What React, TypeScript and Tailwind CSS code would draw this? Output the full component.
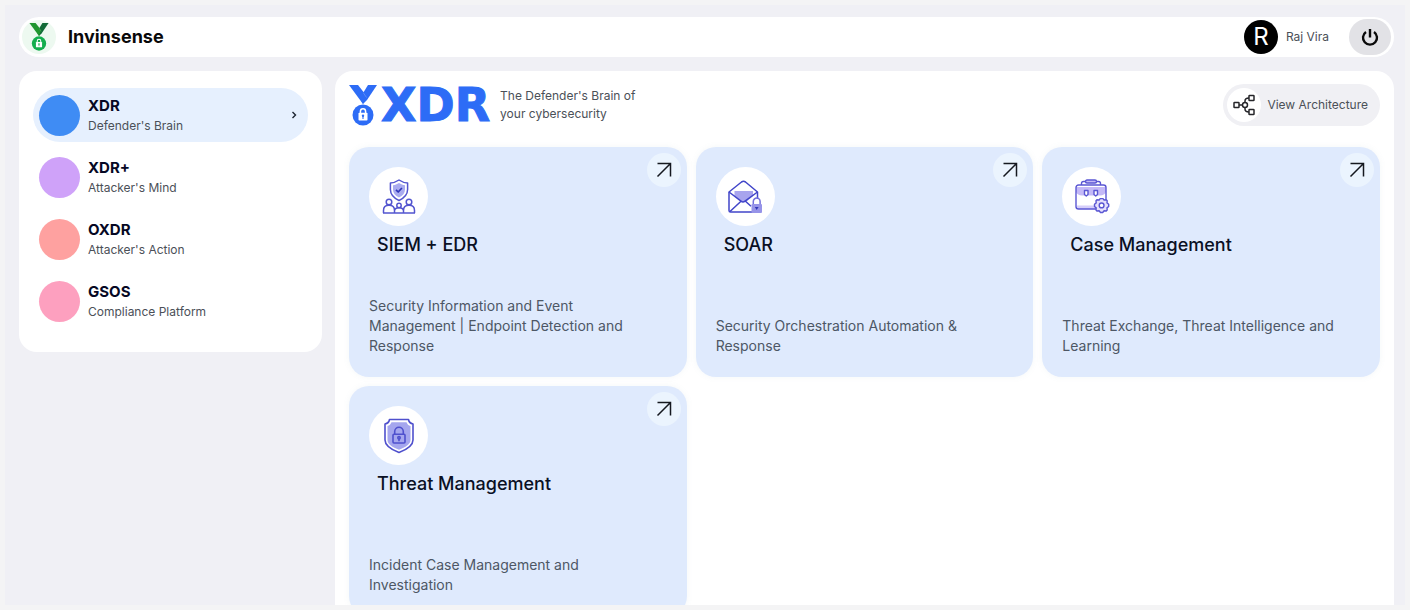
import React from "react";

type Product = { name: string; tagline: string; dot: string; active?: boolean };

const products: Product[] = [
  { name: "XDR", tagline: "Defender's Brain", dot: "bg-[#3f8cf4]", active: true },
  { name: "XDR+", tagline: "Attacker's Mind", dot: "bg-[#cfa2f9]" },
  { name: "OXDR", tagline: "Attacker's Action", dot: "bg-[#fea1a0]" },
  { name: "GSOS", tagline: "Compliance Platform", dot: "bg-[#fda0bf]" },
];

function Medal({ className, left, right, disc }: { className: string; left: string; right: string; disc: string }) {
  return (
    <svg className={className} viewBox="0 0 28 41" aria-hidden="true">
      <path d="M19 0h9L18 15l-4 4-3-6z" fill={right} />
      <path d="M0 0h9l5.500 7L17 11l-3 8z" fill={left} />
      <path d="M14.500 8l3 4.500" stroke="#fff" strokeOpacity=".35" strokeWidth=".6" />
      <circle cx="14" cy="30" r="10.500" fill={disc} />
      <path d="M11.400 28v-1.600a2.600 2.600 0 0 1 5.200 0V28" fill="none" stroke="#fff" strokeWidth="1.500" />
      <rect x="9.500" y="27.800" width="9" height="7.700" rx=".8" fill="#fff" />
      <circle cx="14" cy="30.700" r="1.200" fill={disc} />
      <path d="M14 31v3" stroke={disc} strokeWidth="1.100" />
    </svg>
  );
}

function TeamShieldIcon() {
  return (
    <svg className="size-9" viewBox="0 0 36 36" fill="none" stroke="#5355cf" strokeWidth="1.500" strokeLinejoin="round" aria-hidden="true">
      <path d="M18 1c3 2 5.500 2.800 8.600 3v6.500c0 5-3.600 8.600-8.600 11-5-2.400-8.600-6-8.600-11V4c3.100-.2 5.600-1 8.600-3z" />
      <path d="M18 4.100c2 1.300 3.900 1.900 6 2.200v4.200c0 3.600-2.300 6.100-6 8-3.700-1.900-6-4.400-6-8V6.300c2.100-.3 4-.9 6-2.200z" fill="#a9abf0" stroke="none" />
      <path d="M15 10.800l2.200 2.200 3.700-4" stroke="#3136b8" strokeWidth="1.700" />
      <circle cx="8" cy="23" r="2.800" />
      <circle cx="28" cy="23" r="2.800" />
      <circle cx="18" cy="26.500" r="2.200" />
      <path d="M2.500 34v-2.500c0-3.400 2-5.200 5.500-5.200s5.500 1.800 5.500 5.200V34M22.500 34v-2.500c0-3.400 2-5.200 5.500-5.200s5.500 1.800 5.500 5.200V34M13.500 34v-2c0-2 1.600-3.300 4.500-3.300s4.500 1.300 4.500 3.300v2M2 34h32" />
    </svg>
  );
}

function MailLockIcon() {
  return (
    <svg className="size-9" viewBox="0 0 36 36" fill="none" stroke="#4145c9" strokeWidth="1.500" strokeLinejoin="round" aria-hidden="true">
      <path d="M7.500 12h18.500v5l-7 6h-3.500l-8-6z" fill="#a8a4ee" stroke="none" />
      <path d="M26 33H3.500a1.500 1.500 0 0 1-1.500-1.500V13L14.500 3q2-1.300 4 0L30.500 13v7" />
      <path d="M2 13l12 9.200q2 1.500 4 0L30.500 13M3 32.500l11-10.300M18.500 22.200l5.500 5" />
      <path d="M26.300 25v-2.500a3.400 3.400 0 0 1 6.800 0V25" stroke="#7370dc" />
      <rect x="24.500" y="25" width="10.500" height="9" rx="1" fill="#9693e8" stroke="none" />
      <path d="M27.800 28h3.800l-1.900 3z" fill="#3136b8" stroke="none" />
    </svg>
  );
}

function BriefcaseGearIcon() {
  return (
    <svg className="size-9" viewBox="0 0 36 36" fill="none" stroke="#5b57d3" strokeWidth="1.400" strokeLinejoin="round" aria-hidden="true">
      <path d="M2 8h30v5c-1 2.500-3 3.200-6 3.500H8c-3-.3-5-1-6-3.500z" fill="#c4b9f7" stroke="none" />
      <path d="M2.500 26.500h20V30H4z" fill="#d5cefa" stroke="none" />
      <path d="M22 30H4.500A2.500 2.500 0 0 1 2 27.500v-19A2.500 2.500 0 0 1 4.500 6h25A2.500 2.500 0 0 1 32 8.500v12" />
      <path d="M7.500 6V4.500a2 2 0 0 1 2-2h15a2 2 0 0 1 2 2V6" />
      <rect x="11.500" y="1" width="11" height="3" rx="1.500" fill="#c4b9f7" />
      <path d="M10.500 11.500h3.500v4l-1.750 1.500-1.750-1.500zM20 11.500h3.500v4l-1.750 1.500-1.750-1.500z" fill="#fff" />
      <path d="M29 19.600l1.100 1.400 2.200-.2.900.9-.2 2.200 1.700 1.400v2.200l-1.700 1.400.2 2.200-.9.900-2.200-.2-1.400 1.700h-2.200l-1.400-1.700-2.200.2-.9-.9.200-2.200-1.700-1.400v-2.200l1.700-1.400-.2-2.200.9-.9 2.200.2 1.100-1.400z" fill="#e4dffc" />
      <circle cx="27.600" cy="26.400" r="2.400" fill="#fff" />
    </svg>
  );
}

function ShieldLockIcon() {
  return (
    <svg className="size-9" viewBox="0 0 36 36" fill="none" stroke="#4f50cd" strokeWidth="1.600" strokeLinejoin="round" aria-hidden="true">
      <path d="M8.500 1.500h19c.4 2.500 1.900 4 4.500 4.500v16c0 6-6.500 9.700-14 12.500C10.500 31.700 4 28 4 22V6c2.600-.5 4.100-2 4.500-4.500z" />
      <path d="M10.500 4.300h15c.8 2 1.900 3.100 4 3.800V22c0 4.200-5 7.200-11.500 9.700C11.500 29.200 6.500 26.200 6.500 22V8.100c2.100-.7 3.200-1.800 4-3.800z" fill="#a5a6ee" stroke="none" />
      <path d="M13.700 16.300V13.500a4.300 4.300 0 0 1 8.600 0v2.800" />
      <rect x="12" y="16.300" width="12" height="8.700" rx="1" />
      <circle cx="18" cy="19.800" r="1.200" />
      <path d="M18 21v2.200" />
    </svg>
  );
}

const modules: { title: string; text: string; icon: React.ReactNode }[] = [
  {
    title: "SIEM + EDR",
    text: "Security Information and Event Management | Endpoint Detection and Response",
    icon: <TeamShieldIcon />,
  },
  { title: "SOAR", text: "Security Orchestration Automation & Response", icon: <MailLockIcon /> },
  { title: "Case Management", text: "Threat Exchange, Threat Intelligence and Learning", icon: <BriefcaseGearIcon /> },
  { title: "Threat Management", text: "Incident Case Management and Investigation", icon: <ShieldLockIcon /> },
];

export default function App() {
  return (
    <div className="h-screen overflow-hidden bg-[#f4f4f5] p-[5px] font-['Inter',sans-serif] text-[#4b5058]">
      <div className="flex h-full flex-col gap-3.5 overflow-hidden bg-[#f0f0f5] pt-3 pr-[11px] pl-3.5">
        <header className="flex h-10 shrink-0 items-center rounded-full bg-white px-[3px]">
          <span className="flex size-[34px] items-center justify-center rounded-full bg-[#edf9f0]">
            <Medal className="h-7 w-5" left="#20962f" right="#0f6a35" disc="#14ae4e" />
          </span>
          <h1 className="ml-3 text-lg font-bold text-[#08080a]">Invinsense</h1>
          <div className="ml-auto flex items-center">
            <span className="flex size-[34px] items-center justify-center rounded-full bg-black text-2xl text-white">R</span>
            <span className="ml-2 text-xs">Raj Vira</span>
            <button type="button" aria-label="Log out" className="ml-5 flex h-9 w-[42px] items-center justify-center rounded-full bg-[#e2e2e6]">
              <svg className="size-5" viewBox="0 0 20 20" fill="none" stroke="#0a0a0a" strokeWidth="2.400" aria-hidden="true">
                <path d="M10 2v8.500M6 4.900a7 7 0 1 0 8 0" />
              </svg>
            </button>
          </div>
        </header>

        <div className="flex min-h-0 flex-1 gap-[13px]">
          <nav className="flex w-[303px] shrink-0 flex-col gap-2 self-start rounded-[18px] bg-white px-3.5 pt-[17px] pb-6">
            {products.map((p) => (
              <a
                key={p.name}
                href="#"
                className={
                  p.active
                    ? "flex items-center rounded-full bg-[#e6f0fe] py-1.5 pr-2 pl-1.5"
                    : "flex items-center rounded-full py-1.5 pr-2 pl-1.5"
                }
              >
                <span className={"size-[41px] shrink-0 rounded-full " + p.dot} />
                <span className="ml-2 flex flex-col pt-0.5">
                  <span className="text-[15px] leading-5 font-bold text-[#060824]">{p.name}</span>
                  <span className="text-xs leading-5">{p.tagline}</span>
                </span>
                {p.active && (
                  <svg className="ml-auto size-3" viewBox="0 0 12 12" fill="none" stroke="#1c2430" strokeWidth="1.400" aria-hidden="true">
                    <path d="M4.500 3l3 3-3 3" />
                  </svg>
                )}
              </a>
            ))}
          </nav>

          <main className="min-w-0 flex-1 overflow-hidden rounded-t-[18px] bg-white px-3.5 pt-[13px]">
            <div className="flex h-[42px] items-center">
              <Medal className="h-[41px] w-7 shrink-0" left="#2d6cf6" right="#2d6cf6" disc="#2d6cf6" />
              <h2 className="ml-1 font-['DejaVu_Sans',sans-serif] text-[46px] leading-[42px] font-bold text-[#2d6cf6] [-webkit-text-stroke:1px_#2d6cf6]">XDR</h2>
              <p className="ml-2.5 w-36 text-xs leading-[18px]">The Defender's Brain of your cybersecurity</p>
              <button type="button" className="ml-auto flex h-[42px] items-center rounded-full bg-[#f0f0f4] pr-3 pl-1">
                <span className="flex size-[34px] items-center justify-center rounded-full bg-white">
                  <svg className="size-[22px]" viewBox="0 0 22 22" fill="none" stroke="#26262a" strokeWidth="1.500" aria-hidden="true">
                    <rect x="1" y="8.500" width="5" height="5" rx=".6" />
                    <circle cx="12" cy="11" r="2.500" />
                    <rect x="16" y="1.500" width="5" height="5" rx=".6" />
                    <rect x="16" y="15.500" width="5" height="5" rx=".6" />
                    <path d="M6 11h3.500M12 8.500V7q0-3 4-3M12 13.500V15q0 3 4 3" />
                  </svg>
                </span>
                <span className="ml-1.5 text-xs">View Architecture</span>
              </button>
            </div>

            <div className="mt-[21px] grid grid-cols-3 gap-[9px]">
              {modules.map((m) => (
                <article key={m.title} className="relative flex min-h-[230px] flex-col rounded-[20px] bg-[#dfeafd] px-5 pt-5 pb-[21px] shadow-[0_0_6px_rgba(120,150,170,0.08)]">
                  <span className="flex size-[59px] items-center justify-center rounded-full bg-white">{m.icon}</span>
                  <h3 className="mt-[5px] pl-2 text-lg leading-7 font-medium text-[#0a1024]">{m.title}</h3>
                  <p className="mt-auto pr-3 text-sm leading-5 text-[#4d5765]">{m.text}</p>
                  <a
                    href="#"
                    aria-label={"Open " + m.title}
                    className="absolute top-1.5 right-1.5 flex size-[34px] items-center justify-center rounded-full bg-[#ebf4fe]"
                  >
                    <svg className="size-4" viewBox="0 0 16 16" fill="none" stroke="#15181f" strokeWidth="1.500" aria-hidden="true">
                      <path d="M1.500 14.500l13-13M1.500 1.500h13v13" />
                    </svg>
                  </a>
                </article>
              ))}
            </div>
          </main>
        </div>
      </div>
    </div>
  );
}
